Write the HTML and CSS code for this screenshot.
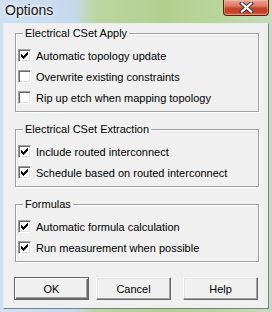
FILE: index.html
```html
<!DOCTYPE html>
<html lang="en">
<head>
    <meta charset="UTF-8">
    <title>Options</title>
    <link rel="stylesheet" href="styles.css">
</head>
<body>
    <div class="window">
        <div class="titlebar">
            <span class="title">Options</span>
            <span class="close">
                <svg width="17" height="11" viewBox="0 0 17 11">
                    <path d="M4 1.5 L13 9.5 M13 1.5 L4 9.5" stroke="#3b3b3b" stroke-width="4.2" stroke-linecap="square"/>
                    <path d="M4 1.5 L13 9.5 M13 1.5 L4 9.5" stroke="#fff" stroke-width="2.2" stroke-linecap="square"/>
                </svg>
            </span>
        </div>

        <div class="client">
            <fieldset class="group">
                <legend>Electrical CSet Apply</legend>
                <div class="check"><span class="box checked"></span>Automatic topology update</div>
                <div class="check"><span class="box"></span>Overwrite existing constraints</div>
                <div class="check"><span class="box"></span>Rip up etch when mapping topology</div>
            </fieldset>

            <fieldset class="group">
                <legend>Electrical CSet Extraction</legend>
                <div class="check"><span class="box checked"></span>Include routed interconnect</div>
                <div class="check"><span class="box checked"></span>Schedule based on routed interconnect</div>
            </fieldset>

            <fieldset class="group">
                <legend>Formulas</legend>
                <div class="check"><span class="box checked"></span>Automatic formula calculation</div>
                <div class="check"><span class="box checked"></span>Run measurement when possible</div>
            </fieldset>

            <div class="buttons">
                <button class="btn default">OK</button>
                <button class="btn">Cancel</button>
                <button class="btn help">Help</button>
            </div>
        </div>
    </div>

    <script>
        // put the classic 7x7 tick into every checked box
        const tick = '<svg width="7" height="7" viewBox="0 0 7 7" shape-rendering="crispEdges">' +
            '<path d="M0 2h1v3h-1z M1 3h1v3h-1z M2 4h1v3h-1z M3 3h1v3h-1z M4 2h1v3h-1z M5 1h1v3h-1z M6 0h1v3h-1z" fill="#000"/></svg>';
        document.querySelectorAll('.box.checked').forEach(box => {
            box.innerHTML = tick;
        });
    </script>
</body>
</html>
```

FILE: styles.css
```css
body {
    margin: 0;
    font-family: 'Liberation Sans', Arial, sans-serif;
    font-size: 11px;
    color: #000;
}
.window {
    width: 272px;
    height: 312px;
    box-sizing: border-box;
    padding: 0 3px 3px 3px;
    display: flex;
    flex-direction: column;
    background: linear-gradient(to right, #cfe0f2 0%, #c6d9ec 27%, #bcd6a2 35%, #b3cf8e 60%, #bad59a 80%, #c8dcbc 100%);
}
.titlebar {
    height: 23px;
    display: flex;
    align-items: flex-start;
}
.title {
    font-size: 14px;
    line-height: 16px;
    padding: 2px 0 0 2px;
    color: #111;
    text-shadow: 0 0 6px #fff, 0 0 3px #fff;
}
.close {
    margin-left: auto;
    width: 46px;
    height: 16px;
    box-sizing: border-box;
    border: 1px solid #5b2118;
    border-top: none;
    border-radius: 0 0 4px 4px;
    background: linear-gradient(to bottom, #e9a695 0%, #dc7c64 40%, #c9462a 55%, #c43f23 80%, #d86a4e 100%);
    box-shadow: inset 0 0 0 1px rgba(255, 200, 180, 0.45);
    display: flex;
    align-items: center;
    justify-content: center;
}
.client {
    flex: 1;
    background-color: #f0f0f0;
    border: 1px solid;
    border-color: #e6edf4 #73808d #73808d #e6edf4;
    padding-top: 3px;
}
.group {
    width: 244px;
    box-sizing: border-box;
    margin: 0 0 0 11px;
    padding: 5px 0 3px 2px;
    border: 1px solid #a0a0a0;
    box-shadow: 1px 1px 0 #fff, inset 1px 1px 0 #fff;
    min-inline-size: 0;
}
.group + .group {
    margin-top: 11px;
}
.group legend {
    margin-left: 5px;
    padding: 0 2px;
    line-height: 13px;
}
.check {
    height: 21px;
    display: flex;
    align-items: center;
}
.box {
    width: 13px;
    height: 13px;
    box-sizing: border-box;
    margin-right: 5px;
    background-color: #fff;
    border: 1px solid;
    border-color: #a0a0a0 #fff #fff #a0a0a0;
    box-shadow: inset 1px 1px 0 #696969, inset -1px -1px 0 #e3e3e3;
    display: flex;
    align-items: center;
    justify-content: center;
}
.buttons {
    display: flex;
    margin: 15px 0 0 10px;
}
.btn {
    width: 75px;
    height: 23px;
    margin: 0 0 0 7px;
    padding: 0;
    font-family: 'Liberation Sans', Arial, sans-serif;
    font-size: 11px;
    color: #000;
    background-color: #f0f0f0;
    border: 1px solid;
    border-color: #fff #696969 #696969 #fff;
    box-shadow: inset -1px -1px 0 #a0a0a0, inset 1px 1px 0 #e3e3e3;
}
.btn.default {
    margin-left: 0;
    border-color: #646464;
    box-shadow: inset 1px 1px 0 #fff, inset -1px -1px 0 #696969, inset -2px -2px 0 #a0a0a0;
}
.btn.help {
    margin-left: 12px;
}
```
